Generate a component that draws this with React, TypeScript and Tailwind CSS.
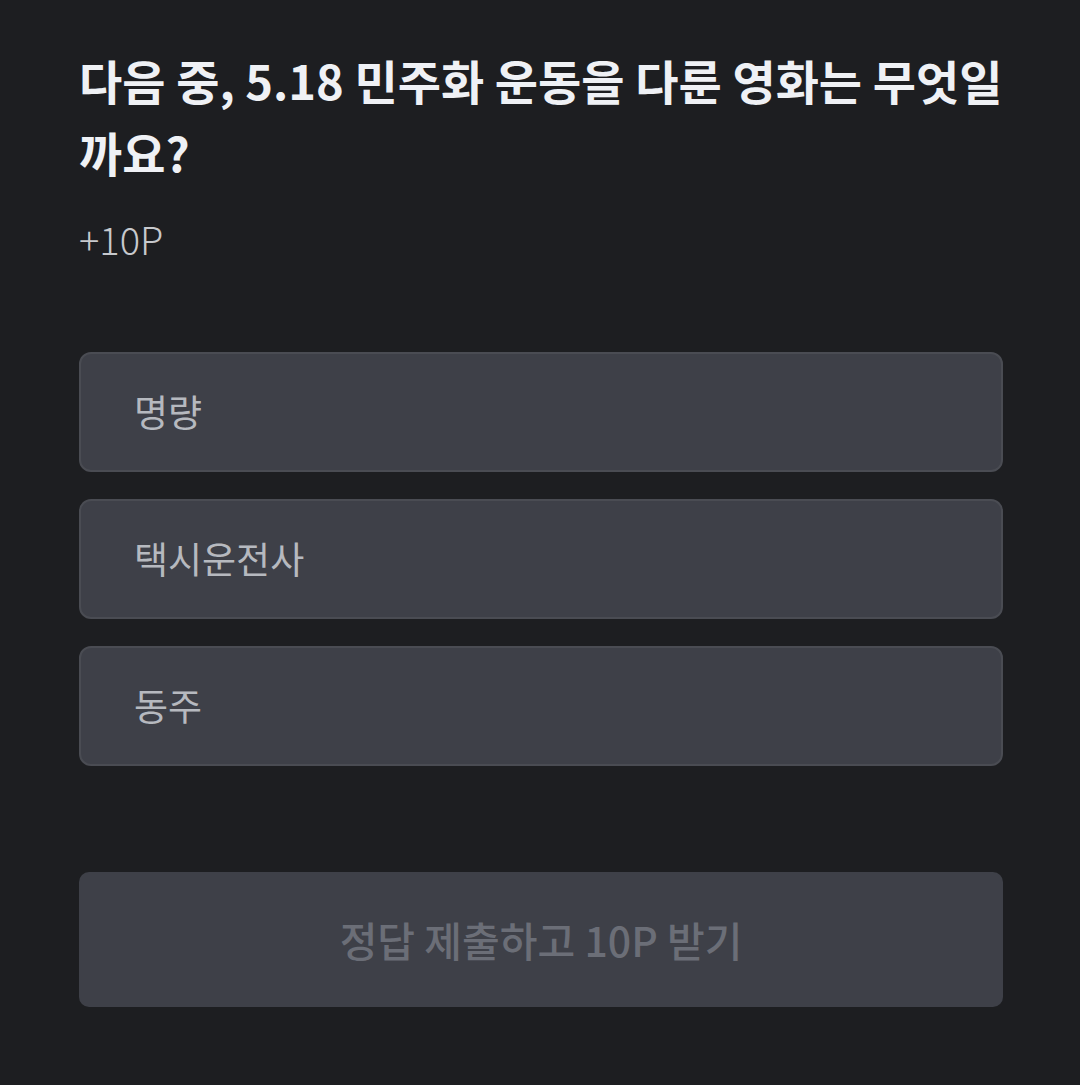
const options = ["명량", "택시운전사", "동주"];

export default function App() {
  return (
    <div
      className="min-h-[1085px] w-full bg-[#1d1e21] pt-[44px] pl-[79px]"
      style={{ fontFamily: '"Noto Sans CJK KR", "Noto Sans", sans-serif' }}
    >
      <div className="w-[924px]">
        <h1 className="text-[47px] font-bold leading-[72px] text-[#eff1f5]">
          다음 중, 5.18 민주화 운동을 다룬 영화는 무엇일까요?
        </h1>
        <p className="mt-[29px] text-[38px] font-light leading-[44px] text-[#c7c9cd]">+10P</p>

        <div className="mt-[91px] flex flex-col gap-[27px]">
          {options.map((o) => (
            <div
              key={o}
              className="flex h-[120px] items-center rounded-[12px] border-2 border-[#4a4c53] bg-[#3e4048] pl-[53px] text-[37px] text-[#b6b9bf]"
            >
              {o}
            </div>
          ))}
        </div>

        <button className="mt-[106px] flex h-[135px] w-full items-center justify-center rounded-[10px] bg-[#3e4048] text-[41px] font-medium text-[#6b6e77]">
          정답 제출하고 10P 받기
        </button>
      </div>
    </div>
  );
}
